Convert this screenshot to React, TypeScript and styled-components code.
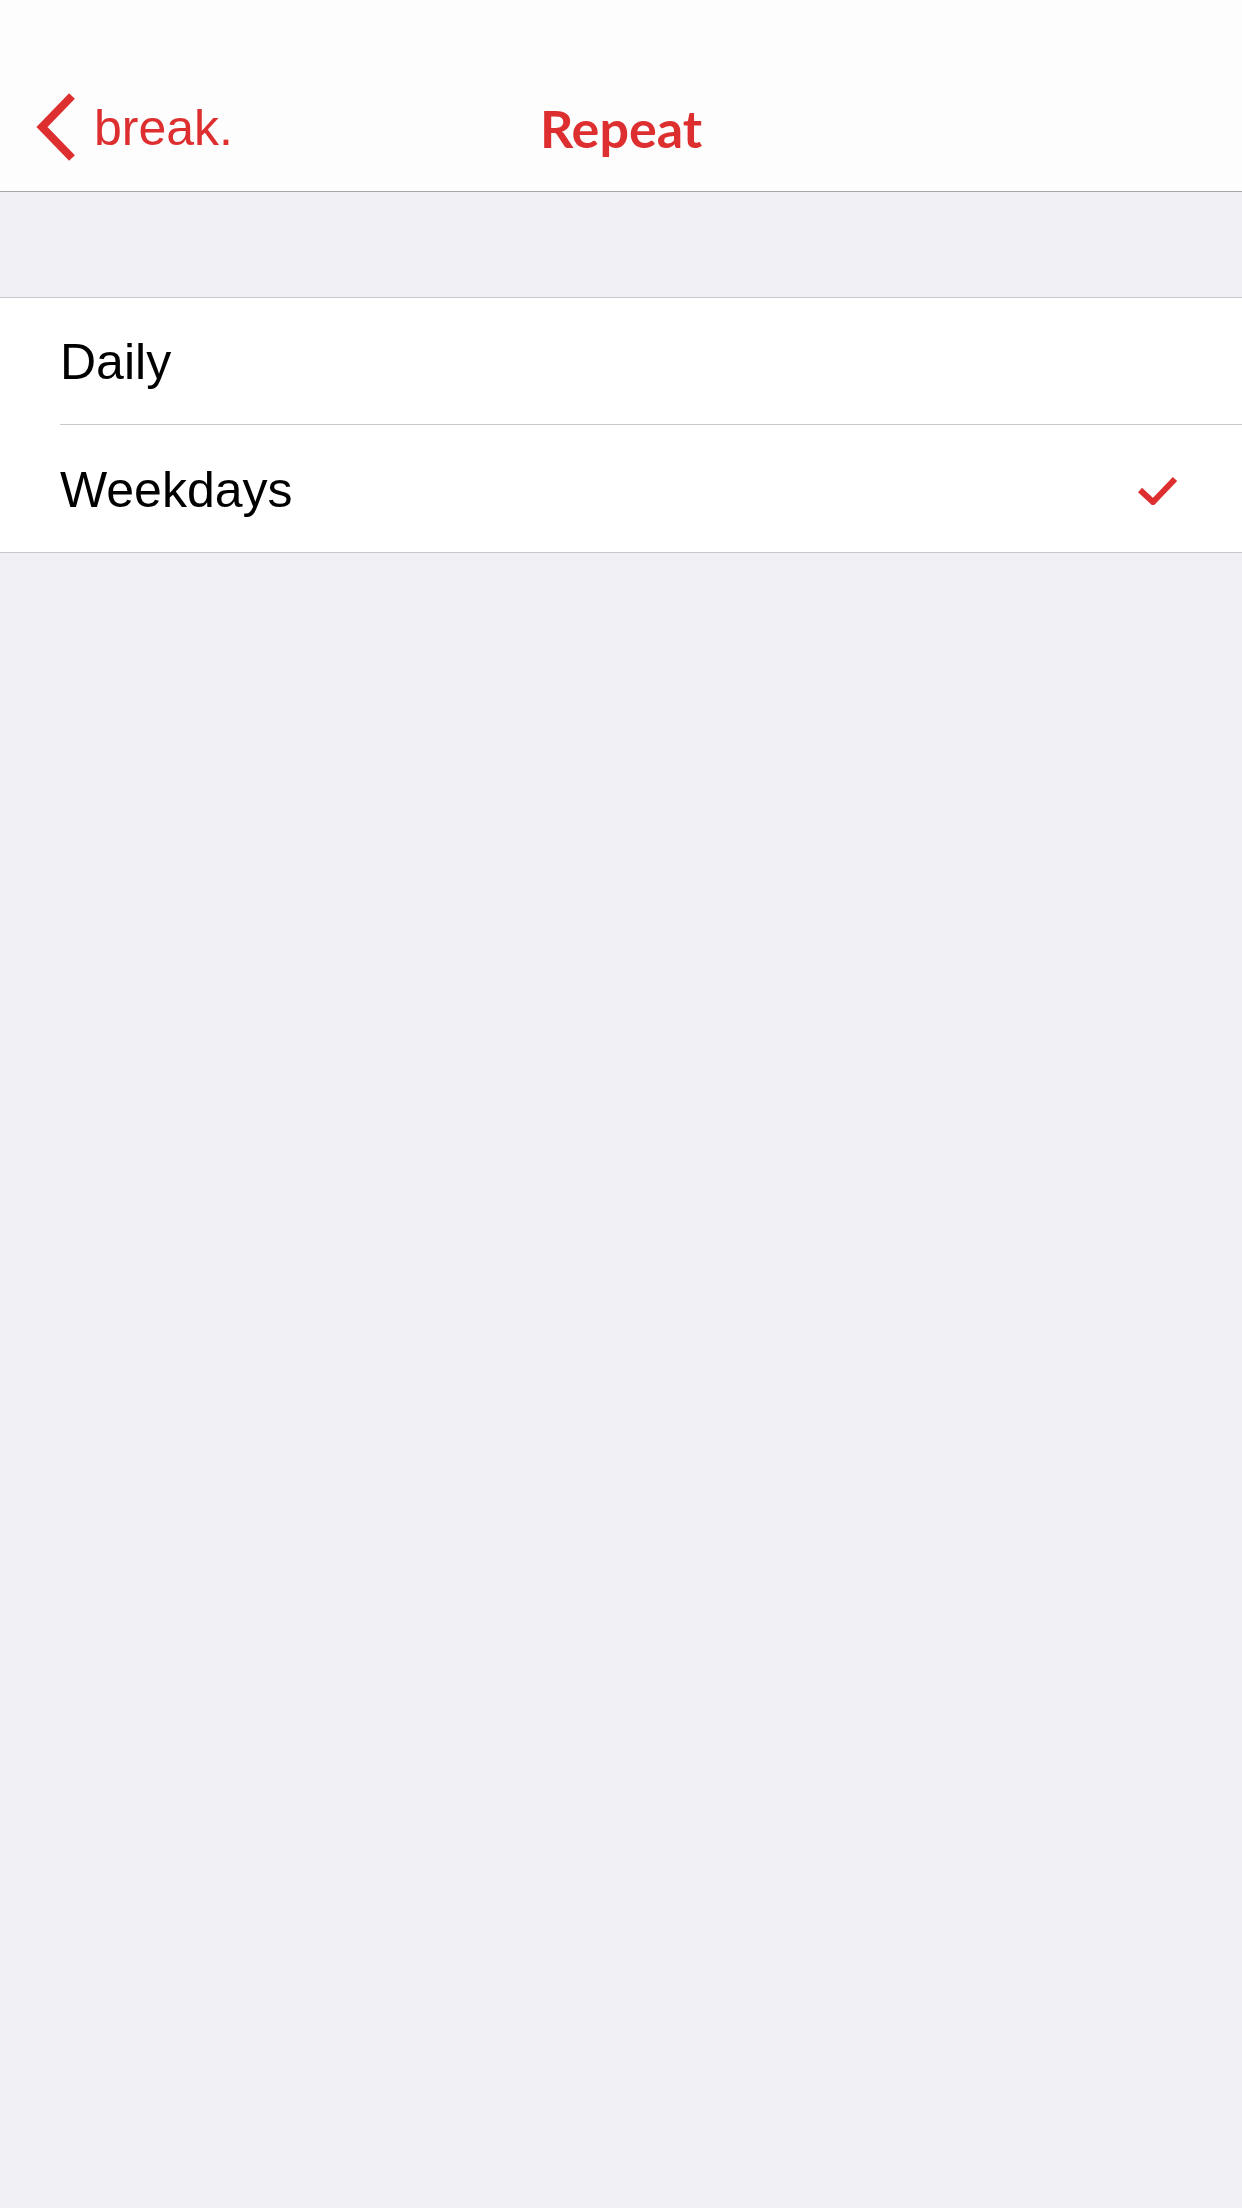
import React from "react";
import styled, { createGlobalStyle } from "styled-components";

const GlobalStyle = createGlobalStyle`
  html, body {
    margin: 0;
    padding: 0;
    background: #efeff4;
  }
  body {
    font-family: "Liberation Sans", Arial, sans-serif;
  }
`;

const RED = "#dd2f2f";

const Page = styled.div`
  width: 1242px;
  min-height: 2208px;
  background: #efeff4;
  display: flex;
  flex-direction: column;
`;

const NavBar = styled.header`
  height: 192px;
  box-sizing: border-box;
  padding-top: 60px;
  background: #fdfdfd;
  border-bottom: 1px solid #a8a8ab;
  display: grid;
  grid-template-columns: 1fr auto 1fr;
  align-items: center;
`;

const BackButton = styled.button`
  justify-self: start;
  display: flex;
  align-items: center;
  gap: 16px;
  padding: 0 0 0 34px;
  border: none;
  background: none;
  color: ${RED};
  font-family: "Liberation Sans", Arial, sans-serif;
  font-size: 50px;
  line-height: 1;
  cursor: pointer;
  margin-top: 2px;
`;

const BackLabel = styled.span`
  display: block;
  padding-top: 3px;
`;

const Title = styled.h1`
  margin: 0;
  color: ${RED};
  font-family: Lato, "Open Sans", sans-serif;
  font-weight: 700;
  font-size: 52px;
  line-height: 1;
  padding-top: 5px;
`;

const Spacer = styled.div`
  height: 105px;
`;

const List = styled.ul`
  margin: 0;
  padding: 0;
  list-style: none;
  background: #ffffff;
  border-top: 1px solid #c8c7cc;
  border-bottom: 1px solid #c8c7cc;
`;

const Row = styled.li<{ $last?: boolean }>`
  margin-left: 60px;
  padding-right: 64px;
  display: flex;
  align-items: center;
  justify-content: space-between;
  border-bottom: ${(p) => (p.$last ? "none" : "1px solid #c8c7cc")};
  height: ${(p) => (p.$last ? "127px" : "126px")};
`;

const RowLabel = styled.span`
  font-family: "Liberation Sans", Arial, sans-serif;
  font-size: 50px;
  color: #000;
  line-height: 1;
  padding-top: 2px;
`;

const Chevron = () => (
  <svg width="44" height="70" viewBox="0 0 44 70" aria-hidden="true">
    <polyline
      points="38,4 8,35 38,66"
      fill="none"
      stroke={RED}
      strokeWidth="8"
      strokeLinecap="butt"
      strokeLinejoin="miter"
    />
  </svg>
);

const Check = () => (
  <svg width="40" height="32" viewBox="0 0 40 32" aria-hidden="true">
    <polyline
      points="2,17 15,29 37,6"
      fill="none"
      stroke={RED}
      strokeWidth="6"
      strokeLinecap="butt"
      strokeLinejoin="miter"
    />
  </svg>
);

const options = [
  { label: "Daily", checked: false },
  { label: "Weekdays", checked: true },
];

export default function App() {
  return (
    <>
      <GlobalStyle />
      <Page>
        <NavBar>
          <BackButton>
            <Chevron />
            <BackLabel>break.</BackLabel>
          </BackButton>
          <Title>Repeat</Title>
          <div />
        </NavBar>
        <Spacer />
        <List>
          {options.map((o, i) => (
            <Row key={o.label} $last={i === options.length - 1}>
              <RowLabel>{o.label}</RowLabel>
              {o.checked && <Check />}
            </Row>
          ))}
        </List>
      </Page>
    </>
  );
}
